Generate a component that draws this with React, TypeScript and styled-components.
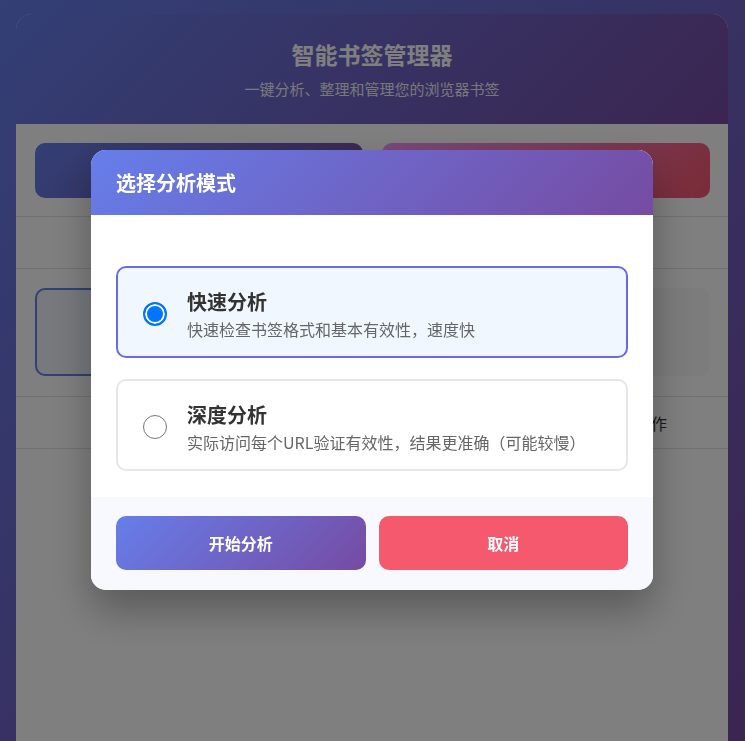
import React from "react";
import styled, { createGlobalStyle } from "styled-components";

const GlobalStyle = createGlobalStyle`
  html, body { margin: 0; padding: 0; height: 100%; overflow: hidden; }
  body {
    font-family: "Noto Sans CJK SC", "Noto Sans", sans-serif;
    background: linear-gradient(135deg, #667eea 0%, #764ba2 100%);
  }
  * { box-sizing: border-box; }
`;

const Page = styled.div`
  height: 100vh;
  padding: 14px 17px 0 16px;
`;

const Container = styled.div`
  height: 100%;
  background: #fff;
  border-radius: 16px 16px 0 0;
  overflow: hidden;
  display: flex;
  flex-direction: column;
`;

const Header = styled.header`
  background: linear-gradient(135deg, #667eea 0%, #764ba2 100%);
  color: #fff;
  text-align: center;
  padding: 24px 20px 25px;
`;

const Title = styled.h1`
  margin: 0;
  font-size: 23px;
  line-height: 32px;
  font-weight: 700;
`;

const Subtitle = styled.p`
  margin: 8px 0 0;
  font-size: 15px;
  line-height: 21px;
  opacity: 0.9;
`;

const Section = styled.div<{ $pad: string; $h?: number; $line?: boolean }>`
  padding: ${(p) => p.$pad};
  border-bottom: ${(p) => (p.$line === false ? "none" : "1px solid #e2e2e2")};
  ${(p) => (p.$h ? `height: ${p.$h}px;` : "")}
`;

const ActionRow = styled.div`
  display: grid;
  grid-template-columns: 1fr 1fr;
  gap: 19px;
`;

const ActionButton = styled.div<{ $variant: "primary" | "danger" }>`
  height: 55px;
  border-radius: 10px;
  background: ${(p) =>
    p.$variant === "primary"
      ? "linear-gradient(135deg, #667eea 0%, #764ba2 100%)"
      : "linear-gradient(135deg, #f093fb 0%, #f5576c 100%)"};
`;

const CardGrid = styled.div`
  display: grid;
  grid-template-columns: repeat(3, 1fr);
  gap: 20px;
`;

const StatCard = styled.div<{ $active?: boolean }>`
  height: 88px;
  border-radius: 10px;
  background: ${(p) => (p.$active ? "#eef3fb" : "#f8f9fa")};
  border: 2px solid ${(p) => (p.$active ? "#667eea" : "#f8f9fa")};
`;

const TableHead = styled.div`
  display: flex;
  align-items: center;
  height: 53px;
  padding: 0 18px 0 19px;
  border-top: 1px solid #e2e2e2;
  border-bottom: 1px solid #e2e2e2;
  margin-top: 20px;
  font-size: 16px;
  color: #333;
`;

const HeadCell = styled.div<{ $w?: number }>`
  ${(p) => (p.$w ? `width: ${p.$w}px;` : "flex: 1;")}
`;

const Overlay = styled.div`
  position: fixed;
  inset: 0;
  background: rgba(0, 0, 0, 0.5);
  display: flex;
  align-items: center;
  justify-content: center;
`;

const Modal = styled.div`
  width: 562px;
  margin: 0 1px 1px 0;
  background: #fff;
  border-radius: 15px;
  overflow: hidden;
  box-shadow: 0 20px 40px rgba(0, 0, 0, 0.3);
`;

const ModalHeader = styled.div`
  background: linear-gradient(135deg, #667eea 0%, #764ba2 100%);
  padding: 20px 25px;
  height: 65px;
`;

const ModalTitle = styled.h3`
  margin: 0;
  color: #fff;
  font-size: 20px;
  line-height: 25px;
  font-weight: 700;
`;

const ModalBody = styled.div`
  padding: 51px 25px 26px;
  display: flex;
  flex-direction: column;
  gap: 21px;
`;

const Option = styled.label<{ $selected?: boolean }>`
  display: flex;
  align-items: center;
  gap: 20px;
  height: 92px;
  padding: 3px 20px 0 25px;
  border-radius: 10px;
  border: 2px solid ${(p) => (p.$selected ? "#6a6ae6" : "#e3e7eb")};
  background: ${(p) => (p.$selected ? "#f0f7ff" : "#fff")};
  cursor: pointer;
`;

const Radio = styled.span<{ $checked?: boolean }>`
  flex: none;
  width: 24px;
  height: 24px;
  border-radius: 50%;
  ${(p) =>
    p.$checked
      ? `border: 2px solid #0075ff; background: #0075ff; box-shadow: inset 0 0 0 2px #fff;`
      : `border: 1.5px solid #767676; background: #fff;`}
`;

const OptionText = styled.div`
  display: flex;
  flex-direction: column;
`;

const OptionTitle = styled.div`
  font-size: 20px;
  line-height: 28px;
  font-weight: 700;
  color: #333;
`;

const OptionDesc = styled.div`
  margin-top: 2px;
  font-size: 16px;
  line-height: 22px;
  color: #666;
`;

const ModalFooter = styled.div`
  background: #f8f9fe;
  padding: 19px 25px 20px;
  display: grid;
  grid-template-columns: 1fr 1fr;
  gap: 13px;
`;

const FooterButton = styled.button<{ $variant: "primary" | "danger" }>`
  height: 54px;
  border: none;
  border-radius: 10px;
  color: #fff;
  font-family: inherit;
  font-size: 16px;
  font-weight: 700;
  cursor: pointer;
  background: ${(p) =>
    p.$variant === "primary"
      ? "linear-gradient(135deg, #667eea 0%, #764ba2 100%)"
      : "#f5596e"};
`;

export default function App() {
  return (
    <>
      <GlobalStyle />
      <Page>
        <Container>
          <Header>
            <Title>智能书签管理器</Title>
            <Subtitle>一键分析、整理和管理您的浏览器书签</Subtitle>
          </Header>
          <Section $pad="19px 18px 18px 19px">
            <ActionRow>
              <ActionButton $variant="primary" />
              <ActionButton $variant="danger" />
            </ActionRow>
          </Section>
          <Section $pad="0" $h={52} />
          <Section $pad="19px 18px 0 19px" $line={false}>
            <CardGrid>
              <StatCard $active />
              <StatCard />
              <StatCard />
            </CardGrid>
          </Section>
          <TableHead>
            <HeadCell />
            <HeadCell $w={75}>操作</HeadCell>
          </TableHead>
        </Container>
      </Page>
      <Overlay>
        <Modal>
          <ModalHeader>
            <ModalTitle>选择分析模式</ModalTitle>
          </ModalHeader>
          <ModalBody>
            <Option $selected>
              <Radio $checked />
              <OptionText>
                <OptionTitle>快速分析</OptionTitle>
                <OptionDesc>快速检查书签格式和基本有效性，速度快</OptionDesc>
              </OptionText>
            </Option>
            <Option>
              <Radio />
              <OptionText>
                <OptionTitle>深度分析</OptionTitle>
                <OptionDesc>实际访问每个URL验证有效性，结果更准确（可能较慢）</OptionDesc>
              </OptionText>
            </Option>
          </ModalBody>
          <ModalFooter>
            <FooterButton $variant="primary">开始分析</FooterButton>
            <FooterButton $variant="danger">取消</FooterButton>
          </ModalFooter>
        </Modal>
      </Overlay>
    </>
  );
}
